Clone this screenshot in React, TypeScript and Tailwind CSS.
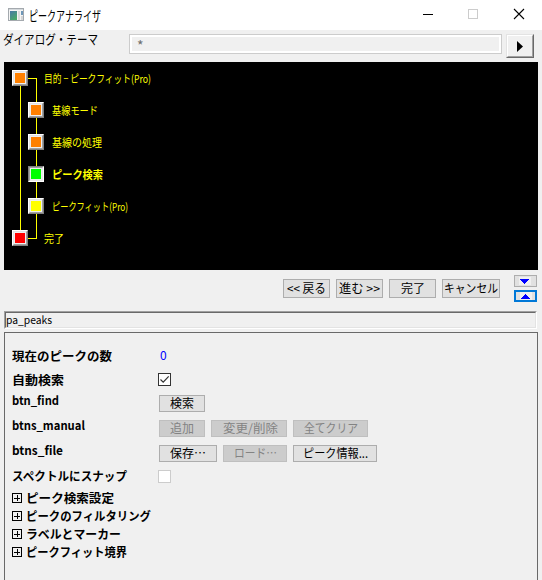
import { useLayoutEffect, useRef, useState } from "react";
import type { ReactNode } from "react";
import clsx from "clsx";

/** Single line of text condensed or widened to a given width. */
function Fit({ w, className, children }: { w: number; className?: string; children: string }) {
  const ref = useRef<HTMLSpanElement>(null);
  const [scale, setScale] = useState(1);
  useLayoutEffect(() => {
    if (ref.current) setScale(w / ref.current.getBoundingClientRect().width * scale);
  }, [w, children]);
  return (
    <span className={clsx("block shrink-0 whitespace-nowrap", className)} style={{ width: w }}>
      <span ref={ref} className="inline-block origin-left" style={{ transform: `scaleX(${scale})` }}>
        {children}
      </span>
    </span>
  );
}

function Node({ color, active }: { color: string; active?: boolean }) {
  return (
    <span
      className={clsx(
        "size-4 shrink-0 border",
        active
          ? "border-t-[#808080] border-l-[#808080] border-r-white border-b-white"
          : "border-t-white border-l-white border-r-[#808080] border-b-[#808080]",
      )}
    >
      <span
        className={clsx(
          "block size-[14px] border",
          active
            ? "border-t-[#a0a0a0] border-l-[#a0a0a0] border-r-[#e8e8e8] border-b-[#e8e8e8]"
            : "border-t-[#e3e3e3] border-l-[#e3e3e3] border-r-[#a0a0a0] border-b-[#a0a0a0]",
        )}
      >
        <span className={clsx("block size-3 border border-[#efefef]", color)} />
      </span>
    </span>
  );
}

const steps = [
  { label: "目的 − ピークフィット(Pro)", w: 107, color: "bg-[#ff8000]", root: true },
  { label: "基線モード", w: 46, color: "bg-[#ff8000]" },
  { label: "基線の処理", w: 50, color: "bg-[#ff8000]" },
  { label: "ピーク検索", w: 51, color: "bg-[#00ff00]", active: true },
  { label: "ピークフィット(Pro)", w: 76, color: "bg-[#ffff00]" },
  { label: "完了", w: 20, color: "bg-[#ff0000]", root: true },
];

function StepTree() {
  return (
    <div className="relative mr-1 ml-1 h-[208px] bg-black pt-2 text-[11px] leading-4 text-[#ffff00]">
      <span className="absolute top-4 left-4 h-40 w-px bg-[#ffff00]" />
      <span className="absolute top-4 left-4 h-[161px] w-[17px] border border-l-0 border-[#ffff00]" />
      <div className="relative flex flex-col gap-4">
        {steps.map((s) => (
          <div key={s.label} className={clsx("flex h-4", s.root ? "pl-2" : "pl-6")}>
            <Node color={s.color} active={s.active} />
            <Fit w={s.w} className={clsx(s.root ? "ml-4" : "ml-2", s.active && "font-bold")}>
              {s.label}
            </Fit>
          </div>
        ))}
      </div>
    </div>
  );
}

function Btn({ label, tw, size, disabled }: { label: string; tw: number; size: string; disabled?: boolean }) {
  return (
    <button
      className={clsx(
        "flex shrink-0 items-start justify-center border text-[12px] leading-[15px]",
        size,
        disabled ? "border-[#bfbfbf] bg-[#cccccc] text-[#838383]" : "border-[#adadad] bg-[#e1e1e1] text-black",
      )}
    >
      <Fit w={tw} className="-mt-px">{label}</Fit>
    </button>
  );
}

function Row({ label, w, className, children }: { label: string; w: number; className: string; children: ReactNode }) {
  return (
    <div className={clsx("flex items-start", className)}>
      <div className="w-[147px] shrink-0 font-bold">
        <Fit w={w}>{label}</Fit>
      </div>
      {children}
    </div>
  );
}

const groups = [
  { label: "ピーク検索設定", w: 88 },
  { label: "ピークのフィルタリング", w: 125 },
  { label: "ラベルとマーカー", w: 95 },
  { label: "ピークフィット境界", w: 101 },
];

export default function App() {
  return (
    <div className="flex h-[580px] w-[542px] flex-col overflow-hidden bg-[#f0f0f0] font-['Noto_Sans_CJK_JP',sans-serif] text-[12px] leading-4 text-black">
      <header className="flex h-[30px] shrink-0 items-center bg-white pl-2">
        <svg width="16" height="14" viewBox="0 0 16 14" shapeRendering="crispEdges">
          <defs>
            <linearGradient id="pane" x1="0" y1="0" x2="0.6" y2="1">
              <stop offset="0" stopColor="#4879a8" />
              <stop offset="1" stopColor="#48a868" />
            </linearGradient>
          </defs>
          <rect x="0.5" y="0.5" width="15" height="12" fill="#f4f4f4" stroke="#a4a9ae" />
          <rect x="1" y="1" width="14" height="1" fill="#d4d9dc" />
          <rect x="2" y="3" width="7" height="9" fill="url(#pane)" />
          <rect x="10" y="3" width="2" height="9" fill="#dcdcdc" />
          <rect x="13" y="3" width="2" height="4" fill="#6e97b8" />
          <rect x="13" y="8" width="2" height="4" fill="#d5d5d5" />
        </svg>
        <Fit w={72} className="ml-[5px] -mt-px text-[14px]">ピークアナライザ</Fit>
        <svg className="ml-auto" width="119" height="30" viewBox="423 0 119 30" fill="none">
          <path d="M423 14.5h10" stroke="#000" />
          <rect x="468.5" y="9.5" width="9" height="9" stroke="#ccc" />
          <path d="M514 9l10 10M524 9l-10 10" stroke="#000" strokeWidth="1.1" />
        </svg>
      </header>

      <div className="flex h-8 shrink-0 items-start pt-1 pl-[3px]">
        <Fit w={95} className="-mt-[3px] text-[13px]">ダイアログ・テーマ</Fit>
        <div className="ml-[31px] h-5 w-[373px] border border-[#cccccc] bg-white p-[2px]">
          <div className="h-[14px] bg-[#f0f0f0] pl-[5px] text-[14px] leading-[16px] text-[#6d6d6d]">*</div>
        </div>
        <button className="ml-1 h-6 w-7 border border-t-[#e3e3e3] border-r-[#696969] border-b-[#696969] border-l-[#e3e3e3]">
          <span className="flex h-[22px] items-center border border-t-white border-r-[#a0a0a0] border-b-[#a0a0a0] border-l-white pl-[9px]">
            <svg width="6" height="11" viewBox="0 0 6 11"><path d="M0 0L6 5.5L0 11Z" /></svg>
          </span>
        </button>
      </div>

      <StepTree />

      <div className="flex h-[41px] shrink-0 items-start pt-[5px] pl-[283px]">
        <div className="flex gap-1.5 pt-1">
          <Btn label="<< 戻る" tw={39} size="h-[19px] w-[47px] pt-px" />
          <Btn label="進む >>" tw={41} size="h-[19px] w-[47px] pt-px" />
          <Btn label="完了" tw={24} size="h-[19px] w-[47px] pt-px" />
          <Btn label="キャンセル" tw={54} size="h-[19px] w-[58px] pt-px" />
        </div>
        <div className="ml-[14px] flex flex-col gap-[3px]">
          <button className="flex h-3 w-[23px] items-center border border-[#adadad] bg-[#e1e1e1] pl-1">
            <span className="flex h-2 w-3 items-start bg-[#f0f0f0] pt-[2px] pl-px">
              <svg width="9" height="5" viewBox="0 0 9 5" shapeRendering="crispEdges"><path d="M0 0H9L4.5 5Z" fill="#00f" /></svg>
            </span>
          </button>
          <button className="flex h-3 w-[23px] items-center border-2 border-[#0078d7] bg-[#e1e1e1] pl-1">
            <span className="flex h-2 w-3 items-end bg-[#f0f0f0] pb-px pl-px">
              <svg width="9" height="5" viewBox="0 0 9 5" shapeRendering="crispEdges"><path d="M0 5H9L4.5 0Z" fill="#00f" /></svg>
            </span>
          </button>
        </div>
      </div>

      <div className="mr-[5px] ml-1 h-[18px] shrink-0 border border-t-[#a0a0a0] border-r-white border-b-white border-l-[#a0a0a0]">
        <div className="h-4 border border-t-[#696969] border-r-[#e3e3e3] border-b-[#e3e3e3] border-l-[#696969] text-[11px] leading-[12px]">
          <Fit w={46}>pa_peaks</Fit>
        </div>
      </div>

      <main className="mt-[3px] mr-1 ml-1 flex grow flex-col border border-b-0 border-[#696969] pt-[15px] pl-[7px]">
        <Row label="現在のピークの数" w={100} className="h-6">
          <span className="ml-px text-[12px] leading-[14px] text-[#0000ff]">0</span>
        </Row>
        <Row label="自動検索" w={52} className="h-5">
          <span className="mt-px -ml-px size-[13px] border border-[#333] bg-white">
            <svg width="11" height="11" viewBox="0 0 11 11" fill="none">
              <path d="M1.5 5.5L4.2 8.2L9.7 2.3" stroke="#333" strokeWidth="1.2" />
            </svg>
          </span>
        </Row>
        <Row label="btn_find" w={47} className="h-[25px]">
          <div className="mt-[3px]"><Btn label="検索" tw={24} size="h-[17px] w-[46px]" /></div>
        </Row>
        <Row label="btns_manual" w={73} className="h-[25px]">
          <div className="mt-[3px] flex gap-1.5">
            <Btn label="追加" tw={24} size="h-[17px] w-[46px]" disabled />
            <Btn label="変更/削除" tw={55} size="h-[17px] w-[76px]" disabled />
            <Btn label="全てクリア" tw={54} size="h-[17px] w-[75px]" disabled />
          </div>
        </Row>
        <Row label="btns_file" w={51} className="h-[26px]">
          <div className="mt-[3px] flex gap-1.5">
            <Btn label="保存⋯" tw={36} size="h-[17px] w-[58px]" />
            <Btn label="ロード⋯" tw={43} size="h-[17px] w-[64px]" disabled />
            <Btn label="ピーク情報..." tw={65} size="h-[17px] w-[84px]" />
          </div>
        </Row>
        <Row label="スペクトルにスナップ" w={115} className="h-[21px]">
          <span className="mt-[2px] -ml-px size-[13px] border border-[#ccc] bg-white" />
        </Row>
        <div className="flex flex-col font-bold">
          {groups.map((g) => (
            <div key={g.label} className="flex h-[18px] items-center">
              <svg width="10" height="10" viewBox="0 0 10 10" fill="none" stroke="#000" shapeRendering="crispEdges">
                <rect x="0.5" y="0.5" width="9" height="9" />
                <path d="M2 5.5H8M5.5 2V8" />
              </svg>
              <Fit w={g.w} className="ml-1">{g.label}</Fit>
            </div>
          ))}
        </div>
      </main>
    </div>
  );
}
